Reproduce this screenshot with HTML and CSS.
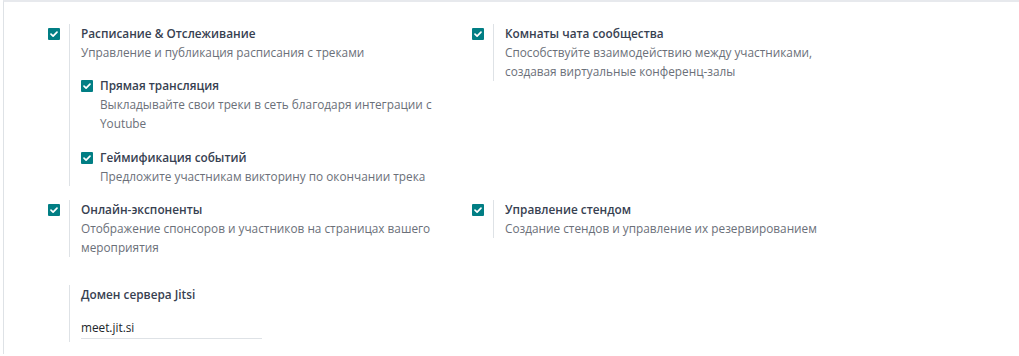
FILE: index.html
```html
<!DOCTYPE html>
<html lang="ru">
<head>
<meta charset="utf-8">
<title>Настройки</title>
<link rel="stylesheet" href="styles.css">
</head>
<body>
<div class="sheet">
  <div class="settings">
    <div class="setting">
      <div class="box-col"><span class="check"><svg viewBox="0 0 12 12"><path d="M3 6.2 L5.1 8.2 L9 4.2" /></svg></span></div>
      <div class="pane">
        <div class="title">Расписание &amp; Отслеживание</div>
        <div class="desc">Управление и публикация расписания с треками</div>
        <div class="sub">
          <span class="check"><svg viewBox="0 0 12 12"><path d="M3 6.2 L5.1 8.2 L9 4.2" /></svg></span>
          <div class="sub-body">
            <div class="title">Прямая трансляция</div>
            <div class="desc">Выкладывайте свои треки в сеть благодаря интеграции с Youtube</div>
          </div>
        </div>
        <div class="sub">
          <span class="check"><svg viewBox="0 0 12 12"><path d="M3 6.2 L5.1 8.2 L9 4.2" /></svg></span>
          <div class="sub-body">
            <div class="title">Геймификация событий</div>
            <div class="desc">Предложите участникам викторину по окончании трека</div>
          </div>
        </div>
      </div>
    </div>
    <div class="setting">
      <div class="box-col"><span class="check"><svg viewBox="0 0 12 12"><path d="M3 6.2 L5.1 8.2 L9 4.2" /></svg></span></div>
      <div class="pane">
        <div class="title">Комнаты чата сообщества</div>
        <div class="desc">Способствуйте взаимодействию между участниками, создавая виртуальные конференц-залы</div>
      </div>
    </div>
    <div class="setting">
      <div class="box-col"><span class="check"><svg viewBox="0 0 12 12"><path d="M3 6.2 L5.1 8.2 L9 4.2" /></svg></span></div>
      <div class="pane">
        <div class="title">Онлайн-экспоненты</div>
        <div class="desc">Отображение спонсоров и участников на страницах вашего мероприятия</div>
      </div>
    </div>
    <div class="setting">
      <div class="box-col"><span class="check"><svg viewBox="0 0 12 12"><path d="M3 6.2 L5.1 8.2 L9 4.2" /></svg></span></div>
      <div class="pane">
        <div class="title">Управление стендом</div>
        <div class="desc">Создание стендов и управление их резервированием</div>
      </div>
    </div>
    <div class="setting field">
      <div class="box-col"></div>
      <div class="pane">
        <div class="title">Домен сервера Jitsi</div>
        <div class="input">meet.jit.si</div>
      </div>
    </div>
  </div>
</div>
</body>
</html>
```

FILE: styles.css
```css
html, body {
  margin: 0;
  padding: 0;
  background: #ffffff;
}

body {
  font-family: "Open Sans", "Noto Sans", sans-serif;
  font-size: 11.8px;
  line-height: 19px;
  color: #374151;
}

.sheet {
  margin-left: 3px;
  border-top: 2px solid #e7e9ed;
  border-left: 1px solid #dee2e6;
  min-height: 354px;
  box-sizing: border-box;
}

.settings {
  display: grid;
  grid-template-columns: 424px 424px;
  row-gap: 14px;
  align-items: start;
  padding: 22px 0 0 44px;
}

.setting {
  display: flex;
}

.box-col {
  width: 21px;
  flex: none;
}

.check {
  display: block;
  width: 12px;
  height: 12px;
  margin-top: 4px;
  background: #017e84;
  border-radius: 1px;
  flex: none;
}

.check svg {
  display: block;
  width: 12px;
  height: 12px;
  fill: none;
  stroke: #ffffff;
  stroke-width: 1.7;
  stroke-linecap: round;
  stroke-linejoin: round;
}

.pane {
  border-left: 1px solid #dee2e6;
  padding-left: 11px;
  padding-right: 35px;
  flex: 1;
}

.title {
  font-weight: 600;
  color: #374151;
}

.desc {
  color: #6b7079;
}

.sub {
  display: flex;
  margin-top: 14px;
}

.sub .check {
  margin-right: 7px;
  margin-top: 4px;
}

.sub + .sub {
  margin-top: 15px;
}

.field {
  margin-top: 14px;
}

.field .pane {
  padding-bottom: 3px;
}

.input {
  margin-top: 14px;
  width: 181px;
  height: 20px;
  border-bottom: 1px solid #dee2e6;
  color: #212529;
}
```
